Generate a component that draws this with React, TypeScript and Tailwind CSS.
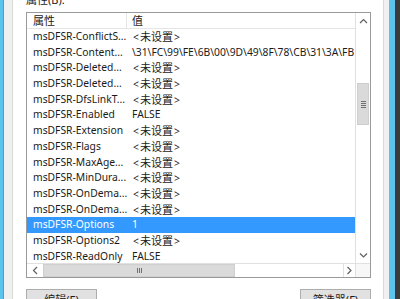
import React from "react";

const rows: [string, string][] = [
  ["msDFSR-ConflictS...", "<未设置>"],
  ["msDFSR-Content...", "\\31\\FC\\99\\FE\\6B\\00\\9D\\49\\8F\\78\\CB\\31\\3A\\FB"],
  ["msDFSR-Deleted...", "<未设置>"],
  ["msDFSR-Deleted...", "<未设置>"],
  ["msDFSR-DfsLinkT...", "<未设置>"],
  ["msDFSR-Enabled", "FALSE"],
  ["msDFSR-Extension", "<未设置>"],
  ["msDFSR-Flags", "<未设置>"],
  ["msDFSR-MaxAge...", "<未设置>"],
  ["msDFSR-MinDura...", "<未设置>"],
  ["msDFSR-OnDema...", "<未设置>"],
  ["msDFSR-OnDema...", "<未设置>"],
  ["msDFSR-Options", "1"],
  ["msDFSR-Options2", "<未设置>"],
  ["msDFSR-ReadOnly", "FALSE"],
];

const font = { fontFamily: '"Noto Sans", "Noto Sans CJK SC", sans-serif' };

function Chevron({ dir }: { dir: "up" | "down" | "left" | "right" }) {
  const d =
    dir === "up"
      ? "M1 5 L4.5 1.5 L8 5"
      : dir === "down"
      ? "M1 1.5 L4.5 5 L8 1.5"
      : dir === "left"
      ? "M5 1 L1.5 4.5 L5 8"
      : "M1.5 1 L5 4.5 L1.5 8";
  const w = dir === "up" || dir === "down" ? 9 : 7;
  const h = dir === "up" || dir === "down" ? 7 : 9;
  return (
    <svg width={w} height={h} viewBox={`0 0 ${w} ${h}`}>
      <path d={d} fill="none" stroke="#606060" strokeWidth="1.2" />
    </svg>
  );
}

function Value({ v }: { v: string }) {
  if (v === "<未设置>") {
    return (
      <span>
        <span className="mx-[1px]">&lt;</span>
        <span className="text-[11px]">未设置</span>
        <span className="mx-[1px]">&gt;</span>
      </span>
    );
  }
  return <span>{v}</span>;
}

export default function App() {
  return (
    <div
      className="w-[400px] h-[299px] overflow-hidden flex bg-[#f0f0f0] text-[10.3px] text-[#1a1a1a]"
      style={font}
    >
      <div className="w-[3px] bg-[#5cc3ec]" />
      <div className="w-px bg-[#8c8c8c]" />
      <div className="w-[8px]" />
      <div className="w-[372px] border-x border-[#d9d9d9] bg-white flex flex-col pl-[13px] pr-[12px]">
        <div className="-mt-[8px] h-4 leading-4 text-[11px]">属性(B):</div>
        <div className="mt-[4px] h-[266px] border border-[#9a9a9a] flex flex-col">
          <div className="flex h-[250px]">
            <div className="w-[328px] flex flex-col overflow-hidden">
              <div className="h-[16px] flex border-b border-[#e5e5e5] shrink-0 text-[11px]">
                <div className="w-[100px] pl-[6px] leading-[15px] border-r border-[#e5e5e5]">属性</div>
                <div className="pl-[5px] leading-[15px]">值</div>
              </div>
              {rows.map(([k, v], i) => (
                <div
                  key={i}
                  className={
                    "h-[15.7px] shrink-0 flex leading-[15.7px] whitespace-nowrap " +
                    (i === 12 ? "bg-[#3399ff] text-white" : "")
                  }
                >
                  <div className="w-[100px] pl-[6px] shrink-0 overflow-hidden">{k}</div>
                  <div className="pl-[5px] overflow-hidden">
                    <Value v={v} />
                  </div>
                </div>
              ))}
            </div>
            <div className="w-[15px] border-l border-[#e0e0e0] flex flex-col">
              <div className="h-[16px] flex items-center justify-center">
                <Chevron dir="up" />
              </div>
              <div className="h-[54px]" />
              <div className="h-[42px] mx-[1px] bg-[#dadada] border border-[#cfcfcf] flex flex-col items-center justify-center gap-[1px]">
                <div className="w-[5px] h-px bg-[#707070]" />
                <div className="w-[5px] h-px bg-[#707070]" />
                <div className="w-[5px] h-px bg-[#707070]" />
                <div className="w-[5px] h-px bg-[#707070]" />
              </div>
              <div className="flex-1" />
              <div className="h-[16px] flex items-center justify-center">
                <Chevron dir="down" />
              </div>
            </div>
          </div>
          <div className="h-[14px] flex border-t border-[#e0e0e0]">
            <div className="w-[16px] flex items-center justify-center">
              <Chevron dir="left" />
            </div>
            <div className="w-[192px] bg-[#dadada] border border-[#cfcfcf] flex items-center justify-center gap-[1px]">
              <div className="w-px h-[5px] bg-[#707070]" />
              <div className="w-px h-[5px] bg-[#707070]" />
              <div className="w-px h-[5px] bg-[#707070]" />
            </div>
            <div className="w-[108px]" />
            <div className="w-[12px] border-l border-[#e0e0e0] flex items-center justify-center">
              <Chevron dir="right" />
            </div>
            <div className="flex-1 border-l border-[#e0e0e0] bg-[#f7f7f7]" />
          </div>
        </div>
        <div className="mt-[11px] flex justify-between text-[11px]">
          <div className="w-[71px] h-[23px] border border-[#adadad] bg-[#e1e1e1] flex items-center justify-center">
            编辑(E)
          </div>
          <div className="w-[71px] h-[23px] border border-[#adadad] bg-[#e1e1e1] flex items-center justify-center">
            筛选器(F)
          </div>
        </div>
      </div>
      <div className="w-[5px]" />
      <div className="w-[6px] bg-[#5cc3ec]" />
      <div className="w-[5px] bg-[#3c3c3c]" />
    </div>
  );
}
